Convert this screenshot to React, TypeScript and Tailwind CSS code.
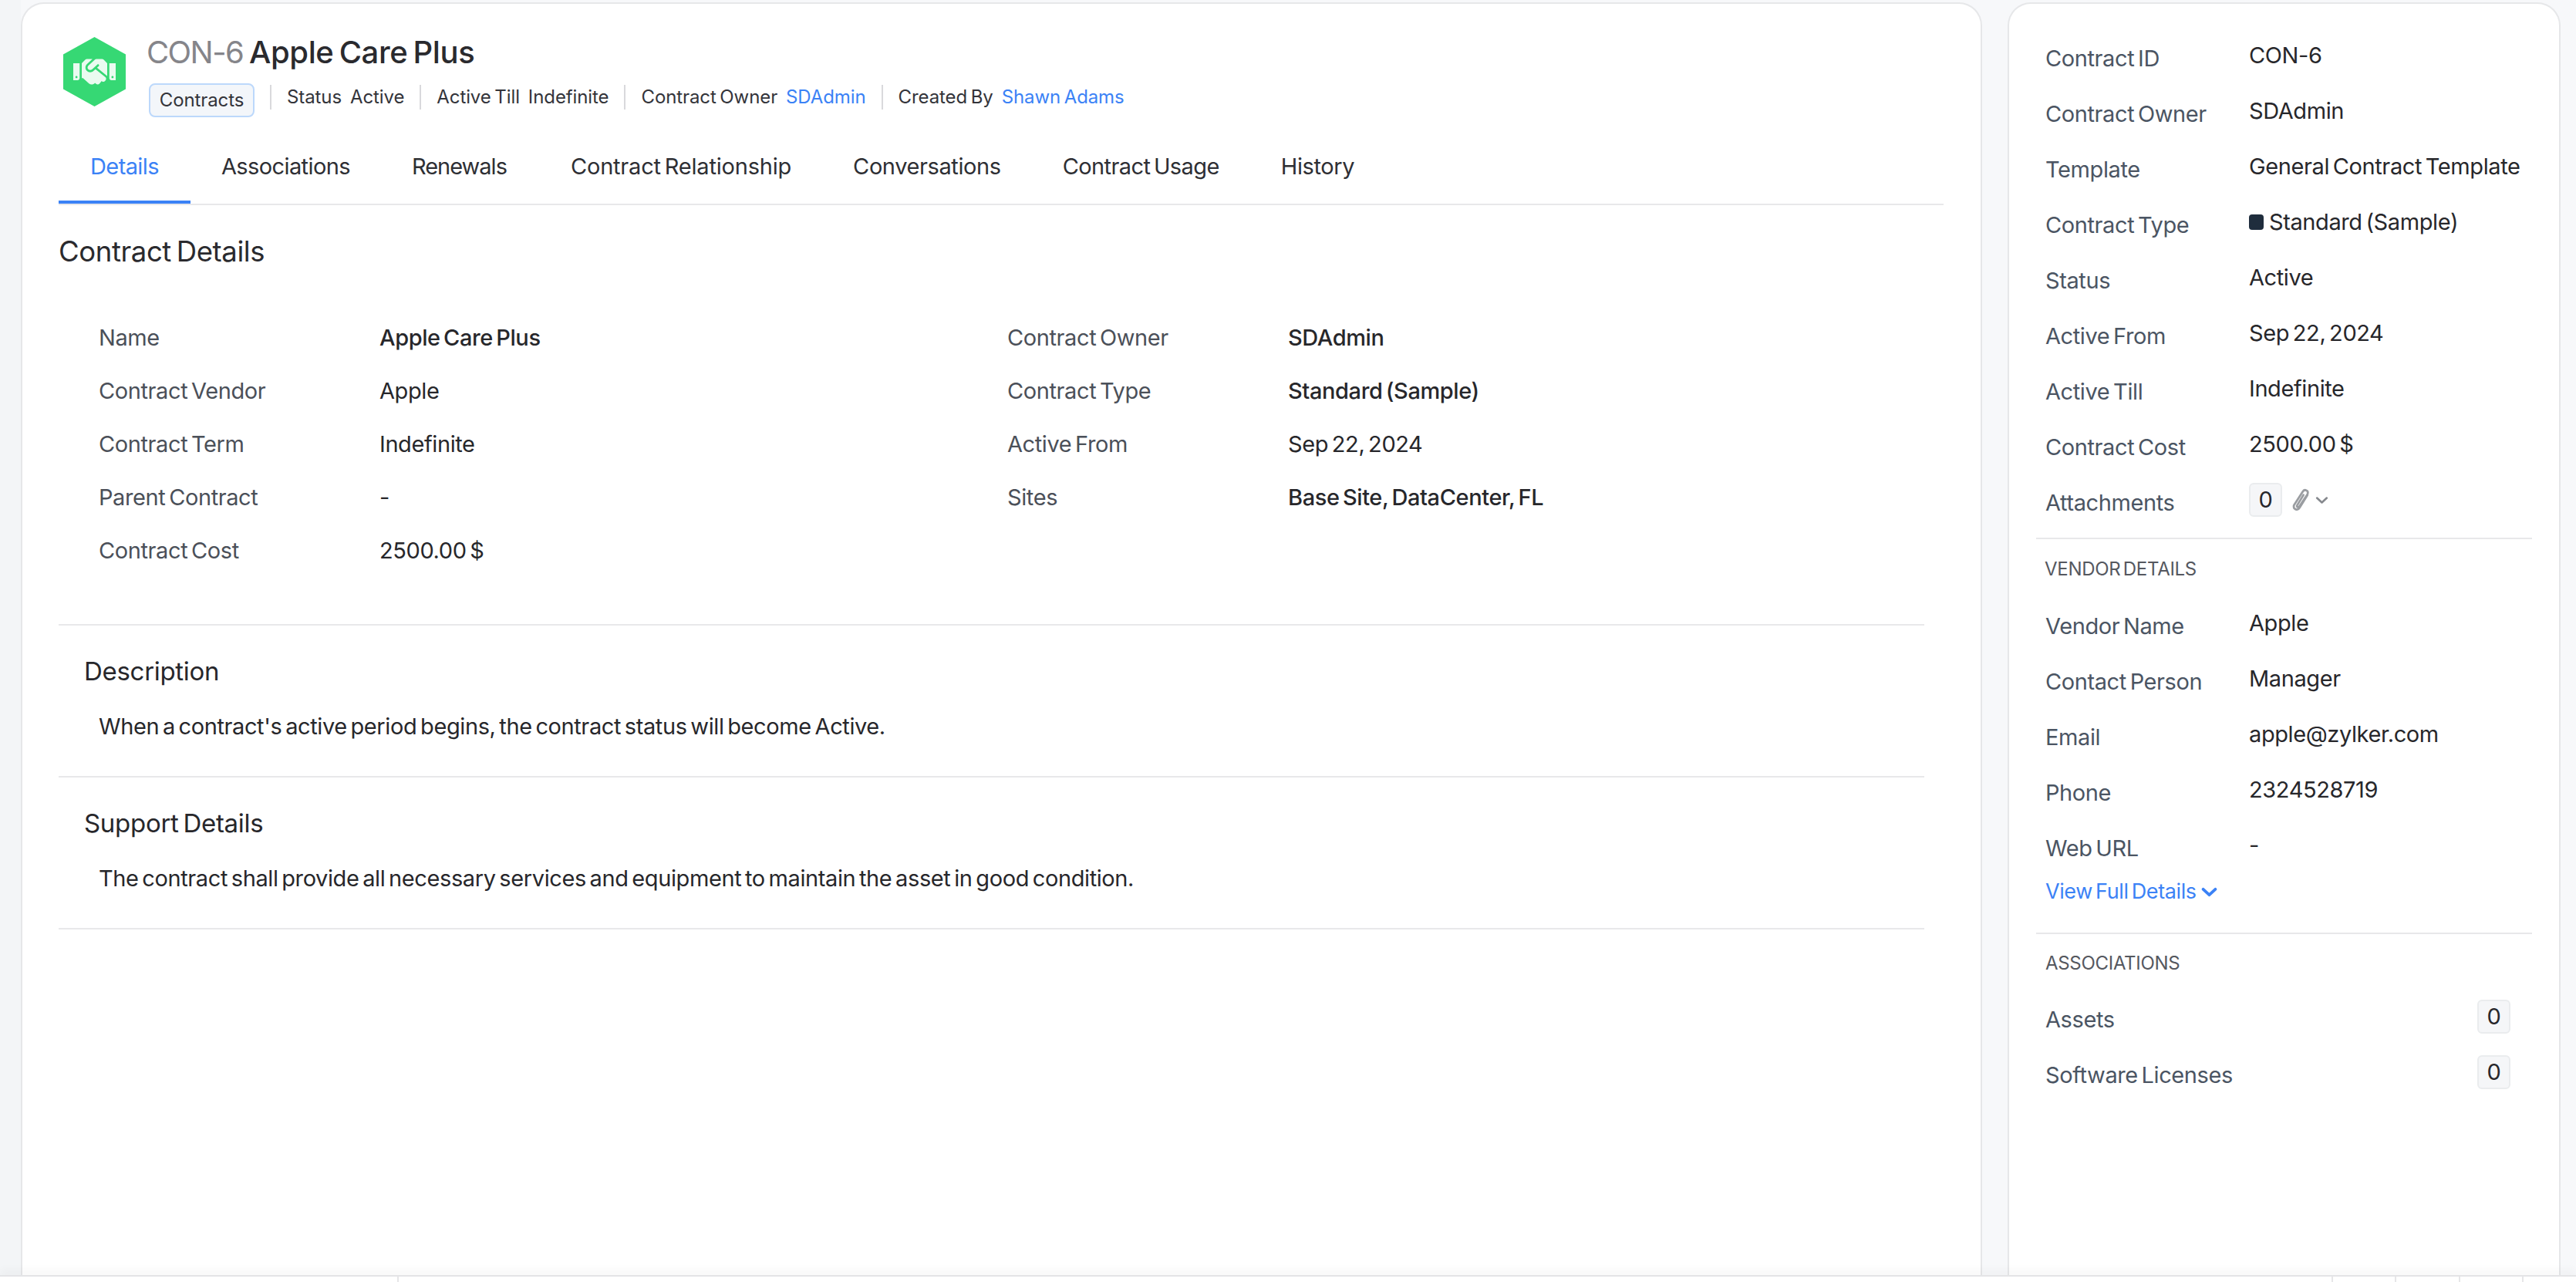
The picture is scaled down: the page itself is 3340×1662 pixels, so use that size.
import { FaHandshake } from "react-icons/fa";

const tabs = [
  { name: "Details", cls: "tracking-[-0.6px] px-[41px]" },
  { name: "Associations", cls: "tracking-[-0.6px] px-[40px]" },
  { name: "Renewals", cls: "tracking-[-1px] px-[40px]" },
  { name: "Contract Relationship", cls: "tracking-[-0.2px] pl-[43px] pr-[40px]" },
  { name: "Conversations", cls: "px-[40px]" },
  { name: "Contract Usage", cls: "tracking-[-0.6px] px-[40px]" },
  { name: "History", cls: "px-[40px]" },
];

const leftCol = [
  { label: "Name", value: "Apple Care Plus", strong: true },
  { label: "Contract Vendor", value: "Apple" },
  { label: "Contract Term", value: "Indefinite" },
  { label: "Parent Contract", value: "-" },
  { label: "Contract Cost", value: "2500.00 $" },
];

const rightCol = [
  { label: "Contract Owner", value: "SDAdmin", strong: true },
  { label: "Contract Type", value: "Standard (Sample)", strong: true },
  { label: "Active From", value: "Sep 22, 2024" },
  { label: "Sites", value: "Base Site, DataCenter, FL", strong: true },
];

const summary = [
  { label: "Contract ID", value: "CON-6" },
  { label: "Contract Owner", value: "SDAdmin" },
  { label: "Template", value: "General Contract Template" },
  { label: "Contract Type", value: "Standard (Sample)", swatch: true },
  { label: "Status", value: "Active" },
  { label: "Active From", value: "Sep 22, 2024" },
  { label: "Active Till", value: "Indefinite" },
  { label: "Contract Cost", value: "2500.00 $" },
];

const vendor = [
  { label: "Vendor Name", value: "Apple" },
  { label: "Contact Person", value: "Manager" },
  { label: "Email", value: "apple@zylker.com" },
  { label: "Phone", value: "2324528719" },
  { label: "Web URL", value: "-" },
];

function Sep() {
  return <div className="mx-[20px] h-[32px] w-[2px] bg-[#d9d9dc]" />;
}

function Meta({ label, value, link }: { label: string; value: string; link?: boolean }) {
  return (
    <div className="flex gap-[11px] whitespace-nowrap [word-spacing:-2px]">
      <span>{label}</span>
      <span className={link ? "text-[#3b82f6]" : ""}>{value}</span>
    </div>
  );
}

function DetailRow({ label, value, strong }: { label: string; value: string; strong?: boolean }) {
  return (
    <div className="flex h-[69px] items-center whitespace-nowrap">
      <div className="w-[364px] text-[#4b5059]">{label}</div>
      <div className={strong ? "font-medium text-[#27272b]" : "text-[#27272b]"}>{value}</div>
    </div>
  );
}

function SideRow({ label, children }: { label: string; children: React.ReactNode }) {
  return (
    <div className="flex h-[72px] items-center whitespace-nowrap">
      <div className="w-[264px] pt-[8px] text-[#4b5563]">{label}</div>
      <div className="flex items-center text-[#27272b]">{children}</div>
    </div>
  );
}

function Count() {
  return (
    <span className="flex h-[44px] w-[43px] items-center justify-center rounded-[6px] border-2 border-[#eaecee] bg-[#f5f6f8] text-[#27272b]">
      0
    </span>
  );
}

function Chevron({ className, color, width }: { className: string; color: string; width: number }) {
  return (
    <svg viewBox="0 0 20 12" className={className} fill="none" stroke={color} strokeWidth={width} strokeLinecap="round" strokeLinejoin="round">
      <path d="M2.5 2.5 10 9.5l7.5-7" />
    </svg>
  );
}

function Section({ title, text }: { title: string; text: string }) {
  return (
    <div className="h-[197px] border-b-2 border-[#e8e8ea] pl-[33px] pt-[39px]">
      <div className="text-[33px] leading-[40px] tracking-[-0.3px] text-[#27272b]">{title}</div>
      <div className="mt-[34px] pl-[19px] text-[#27272b]">{text}</div>
    </div>
  );
}

export default function App() {
  return (
    <div className="flex h-screen w-full flex-col overflow-hidden bg-[#f7f8fa] font-['Inter',sans-serif] text-[29px] leading-[36px] tracking-[-0.4px] [word-spacing:-3px]">
      <div className="flex min-h-0 flex-1">
        <div className="w-[27px] shrink-0 bg-[#f3f5f7]" />
        {/* main card */}
        <div className="mt-[3px] flex w-[2543px] flex-col rounded-t-[30px] border-2 border-b-0 border-[#e6e7e9] bg-white pl-[47px] pr-[48px] pt-[41px]">
          <div className="flex h-[100px]">
            <div className="ml-[6px] mt-[2px] flex h-[90px] w-[81px] shrink-0 items-center justify-center bg-[#36d874] [clip-path:polygon(50%_0,100%_25%,100%_75%,50%_100%,0_75%,0_25%)]">
              <FaHandshake className="h-[44px] w-[55px] text-[#eafbf0]" />
            </div>
            <div className="ml-[27px]">
              <div className="-mt-[3px] text-[40px] leading-[50px] text-[#2a2a2e]">
                <span className="tracking-[-1.6px] text-[#85858a]">CON-6</span> <span className="font-medium">Apple Care Plus</span>
              </div>
              <div className="mt-[7px] flex items-center text-[24px] leading-[32px] tracking-[-0.1px] text-[#33343a]">
                <span className="ml-[3px] mt-[8px] flex h-[44px] w-[137px] items-center justify-center rounded-[8px] border-2 border-[#bcd8fb] bg-[#f3f6fa]">Contracts</span>
                <Sep />
                <Meta label="Status" value="Active" />
                <Sep />
                <Meta label="Active Till" value="Indefinite" />
                <Sep />
                <Meta label="Contract Owner" value="SDAdmin" link />
                <Sep />
                <Meta label="Created By" value="Shawn Adams" link />
              </div>
            </div>
          </div>
          <div className="mt-[26px] flex border-b-2 border-[#e8e8ea]">
            {tabs.map((t, i) => (
              <div
                key={t.name}
                className={`flex h-[92px] items-center whitespace-nowrap border-b-4 ${t.cls} ${
                  i === 0 ? "border-[#3b82f6] text-[#3b82f6]" : "border-transparent text-[#2e2f34]"
                }`}
              >
                {t.name}
              </div>
            ))}
          </div>
          <div className="mt-[38px] text-[36.5px] leading-[44px] text-[#2a2a2e]">Contract Details</div>
          <div className="mr-[25px]">
            <div className="flex h-[463px] border-b-2 border-[#e8e8ea] pl-[52px] pt-[55px]">
              <div className="w-[1178px]">
                {leftCol.map((r) => (
                  <DetailRow key={r.label} {...r} />
                ))}
              </div>
              <div>
                {rightCol.map((r) => (
                  <DetailRow key={r.label} {...r} />
                ))}
              </div>
            </div>
            <Section title="Description" text="When a contract's active period begins, the contract status will become Active." />
            <Section title="Support Details" text="The contract shall provide all necessary services and equipment to maintain the asset in good condition." />
          </div>
        </div>

        {/* side card */}
        <div className="ml-[33px] mt-[3px] w-[717px] rounded-t-[30px] border-2 border-b-0 border-[#e6e7e9] bg-white pl-[35px] pr-[35px] pt-[31px]">
          <div className="pl-[12px]">
            {summary.map((r) => (
              <SideRow key={r.label} label={r.label}>
                {r.swatch && <span className="mr-[7px] h-[20px] w-[19px] rounded-[4px] bg-[#1f2d3d]" />}
                {r.value}
              </SideRow>
            ))}
            <SideRow label="Attachments">
              <Count />
              <svg viewBox="0 0 24 30" className="ml-[12px] h-[32px] w-[25px]" fill="none" stroke="#9a9da1" strokeWidth="2.6" strokeLinecap="round">
                <path d="M20 9 10 25c-2 4-8 2-7-3L14 5c2-4 8-2 6 3L10 23c-1 2-4 1-3-1l8-13" />
              </svg>
              <Chevron className="ml-[6px] h-[11px] w-[17px]" color="#85888d" width={3} />
            </SideRow>
          </div>
          <div className="mt-[13px] border-t-2 border-[#e8e8ea] pl-[11px] pt-[23px] text-[24px] leading-[32px] tracking-[-0.3px] text-[#55585f]">VENDOR DETAILS</div>
          <div className="mt-[18px] pl-[12px]">
            {vendor.map((r) => (
              <SideRow key={r.label} label={r.label}>
                {r.value}
              </SideRow>
            ))}
            <div className="mt-[4px] flex h-[40px] items-center gap-[6px] text-[27px] text-[#3b82f6]">
              View Full Details <Chevron className="h-[13px] w-[21px]" color="#3b82f6" width={3.6} />
            </div>
          </div>
          <div className="mt-[33px] border-t-2 border-[#e8e8ea] pl-[12px] pt-[22px] text-[24px] leading-[32px] tracking-[-0.3px] text-[#55585f]">ASSOCIATIONS</div>
          <div className="mt-[17px] pl-[12px] pr-[28px]">
            <div className="flex h-[72px] items-center justify-between">
              <span className="pt-[8px] text-[#4b5563]">Assets</span>
              <Count />
            </div>
            <div className="flex h-[72px] items-center justify-between">
              <span className="pt-[8px] text-[#4b5563]">Software Licenses</span>
              <Count />
            </div>
          </div>
        </div>
      </div>

      {/* footer strip */}
      <div className="relative z-10 flex h-[9px] justify-end border-t-2 border-[#e4e4e6] bg-white pr-[68px] shadow-[0_-6px_12px_rgba(0,0,0,0.04)]">
        <div className="mr-auto ml-[515px] w-[2px] bg-[#e6e6e8]" />
        <div className="w-[2px] bg-[#e6e6e8]" />
        <div className="ml-[80px] w-[2px] bg-[#e6e6e8]" />
        <div className="ml-[81px] w-[2px] bg-[#e6e6e8]" />
        <div className="ml-[80px] w-[2px] bg-[#e6e6e8]" />
      </div>
    </div>
  );
}
